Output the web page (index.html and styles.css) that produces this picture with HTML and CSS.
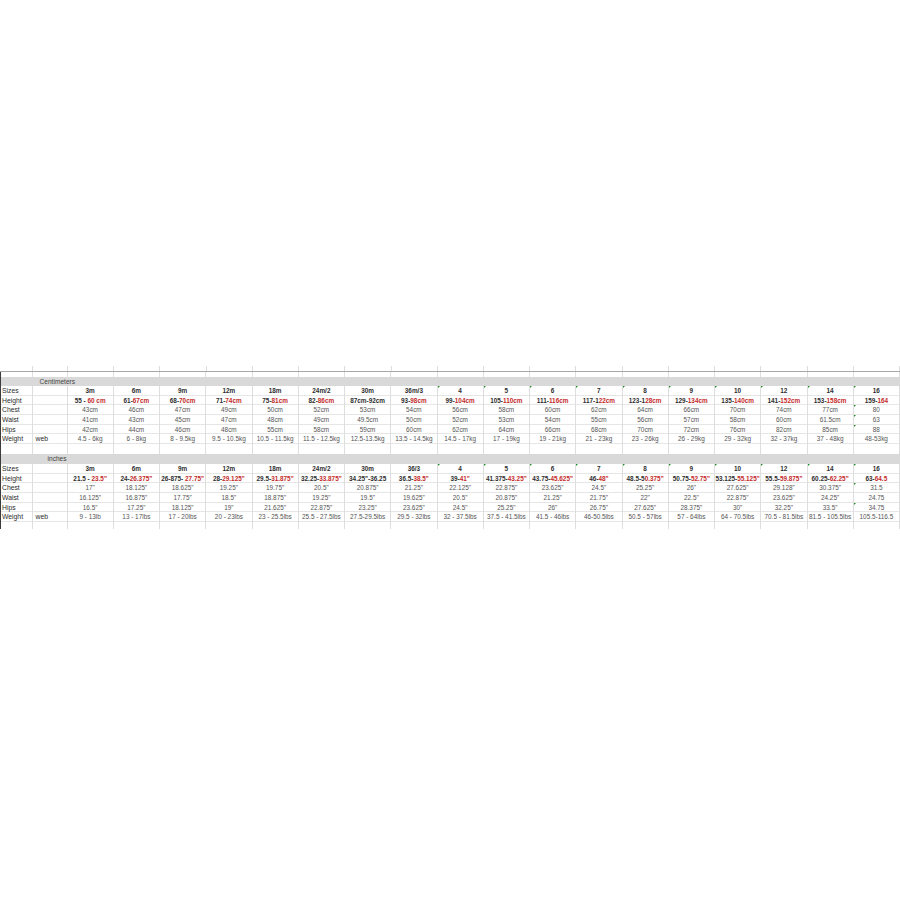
FILE: index.html
```html
<!DOCTYPE html>
<html>
<head>
<meta charset="utf-8">
<link rel="stylesheet" href="styles.css">
</head>
<body>
<div class="sheet">
  <div class="row top"><div class="c"></div><div class="c"></div><div class="c"></div><div class="c"></div><div class="c"></div><div class="c"></div><div class="c"></div><div class="c"></div><div class="c"></div><div class="c"></div><div class="c"></div><div class="c"></div><div class="c"></div><div class="c"></div><div class="c"></div><div class="c"></div><div class="c"></div><div class="c"></div><div class="c"></div><div class="c"></div></div>
  <div class="framed">
    <div class="row thin"><div class="c"></div><div class="c"></div><div class="c"></div><div class="c"></div><div class="c"></div><div class="c"></div><div class="c"></div><div class="c"></div><div class="c"></div><div class="c"></div><div class="c"></div><div class="c"></div><div class="c"></div><div class="c"></div><div class="c"></div><div class="c"></div><div class="c"></div><div class="c"></div><div class="c"></div><div class="c"></div></div>

    <div class="band"><span class="band-cm">Centimeters</span></div>
    <div class="row head"><div class="c lab">Sizes</div><div class="c"></div><div class="c">3m</div><div class="c">6m</div><div class="c">9m</div><div class="c">12m</div><div class="c">18m</div><div class="c">24m/2</div><div class="c">30m</div><div class="c">36m/3</div><div class="c f">4</div><div class="c f">5</div><div class="c f">6</div><div class="c f">7</div><div class="c f">8</div><div class="c f">9</div><div class="c f">10</div><div class="c f">12</div><div class="c f">14</div><div class="c f">16</div></div>
    <div class="row hgt"><div class="c lab">Height</div><div class="c"></div><div class="c">55 - <b>60 cm</b></div><div class="c">61-<b>67cm</b></div><div class="c">68-<b>70cm</b></div><div class="c">71-<b>74cm</b></div><div class="c">75-<b>81cm</b></div><div class="c">82-<b>86cm</b></div><div class="c">87cm-92cm</div><div class="c">93-<b>98cm</b></div><div class="c">99-<b>104cm</b></div><div class="c">105-<b>110cm</b></div><div class="c">111-<b>116cm</b></div><div class="c">117-1<b>22cm</b></div><div class="c">123-1<b>28cm</b></div><div class="c">129-<b>134cm</b></div><div class="c">135-<b>140cm</b></div><div class="c">141-<b>152cm</b></div><div class="c">153-<b>158cm</b></div><div class="c">159-<b>164</b></div></div>
    <div class="row"><div class="c lab">Chest</div><div class="c"></div><div class="c">43cm</div><div class="c">46cm</div><div class="c">47cm</div><div class="c">49cm</div><div class="c">50cm</div><div class="c">52cm</div><div class="c">53cm</div><div class="c">54cm</div><div class="c">56cm</div><div class="c">58cm</div><div class="c">60cm</div><div class="c">62cm</div><div class="c">64cm</div><div class="c">66cm</div><div class="c">70cm</div><div class="c">74cm</div><div class="c">77cm</div><div class="c f">80</div></div>
    <div class="row"><div class="c lab">Waist</div><div class="c"></div><div class="c">41cm</div><div class="c">43cm</div><div class="c">45cm</div><div class="c">47cm</div><div class="c">48cm</div><div class="c">49cm</div><div class="c">49.5cm</div><div class="c">50cm</div><div class="c">52cm</div><div class="c">53cm</div><div class="c">54cm</div><div class="c">55cm</div><div class="c">56cm</div><div class="c">57cm</div><div class="c">58cm</div><div class="c">60cm</div><div class="c">61.5cm</div><div class="c f">63</div></div>
    <div class="row"><div class="c lab">Hips</div><div class="c"></div><div class="c">42cm</div><div class="c">44cm</div><div class="c">46cm</div><div class="c">48cm</div><div class="c">55cm</div><div class="c">58cm</div><div class="c">59cm</div><div class="c">60cm</div><div class="c">62cm</div><div class="c">64cm</div><div class="c">66cm</div><div class="c">68cm</div><div class="c">70cm</div><div class="c">72cm</div><div class="c">76cm</div><div class="c">82cm</div><div class="c">85cm</div><div class="c f">88</div></div>
    <div class="row"><div class="c lab">Weight</div><div class="c sub">web</div><div class="c">4.5 - 6kg</div><div class="c">6 - 8kg</div><div class="c">8 - 9.5kg</div><div class="c">9.5 - 10.5kg</div><div class="c">10.5 - 11.5kg</div><div class="c">11.5 - 12.5kg</div><div class="c">12.5-13.5kg</div><div class="c">13.5 - 14.5kg</div><div class="c">14.5 - 17kg</div><div class="c">17 - 19kg</div><div class="c">19 - 21kg</div><div class="c">21 - 23kg</div><div class="c">23 - 26kg</div><div class="c">26 - 29kg</div><div class="c">29 - 32kg</div><div class="c">32 - 37kg</div><div class="c">37 - 48kg</div><div class="c">48-53kg</div></div>
    <div class="row gap"><div class="c"></div><div class="c"></div><div class="c"></div><div class="c"></div><div class="c"></div><div class="c"></div><div class="c"></div><div class="c"></div><div class="c"></div><div class="c"></div><div class="c"></div><div class="c"></div><div class="c"></div><div class="c"></div><div class="c"></div><div class="c"></div><div class="c"></div><div class="c"></div><div class="c"></div><div class="c"></div></div>

    <div class="band"><span class="band-in">inches</span></div>
    <div class="row head"><div class="c lab">Sizes</div><div class="c"></div><div class="c">3m</div><div class="c">6m</div><div class="c">9m</div><div class="c">12m</div><div class="c">18m</div><div class="c">24m/2</div><div class="c">30m</div><div class="c">36/3</div><div class="c f">4</div><div class="c f">5</div><div class="c f">6</div><div class="c f">7</div><div class="c f">8</div><div class="c f">9</div><div class="c f">10</div><div class="c f">12</div><div class="c f">14</div><div class="c f">16</div></div>
    <div class="row hgt"><div class="c lab">Height</div><div class="c"></div><div class="c">21.5 - <b>23.5"</b></div><div class="c">24-<b>26.375"</b></div><div class="c">26-875- <b>27.75"</b></div><div class="c">28-<b>29.125"</b></div><div class="c">29.5-<b>31.875"</b></div><div class="c">32.25-<b>33.875"</b></div><div class="c">34.25"-36.25</div><div class="c">36.5-<b>38.5"</b></div><div class="c">39-<b>41"</b></div><div class="c">41.375-<b>43.25"</b></div><div class="c">43.75-<b>45.625"</b></div><div class="c">46-<b>48"</b></div><div class="c">48.5-5<b>0.375"</b></div><div class="c">50.75-<b>52.75"</b></div><div class="c">53.125-<b>55.125"</b></div><div class="c">55.5-<b>59.875"</b></div><div class="c">60.25-<b>62.25"</b></div><div class="c">63-<b>64.5</b></div></div>
    <div class="row"><div class="c lab">Chest</div><div class="c"></div><div class="c">17"</div><div class="c">18.125"</div><div class="c">18.625"</div><div class="c">19.25"</div><div class="c">19.75"</div><div class="c">20.5"</div><div class="c">20.875"</div><div class="c">21.25"</div><div class="c">22.125"</div><div class="c">22.875"</div><div class="c">23.625"</div><div class="c">24.5"</div><div class="c">25.25"</div><div class="c">26"</div><div class="c">27.625"</div><div class="c">29.128"</div><div class="c">30.375"</div><div class="c f">31.5</div></div>
    <div class="row"><div class="c lab">Waist</div><div class="c"></div><div class="c">16.125"</div><div class="c">16.875"</div><div class="c">17.75"</div><div class="c">18.5"</div><div class="c">18.875"</div><div class="c">19.25"</div><div class="c">19.5"</div><div class="c">19.625"</div><div class="c">20.5"</div><div class="c">20.875"</div><div class="c">21.25"</div><div class="c">21.75"</div><div class="c">22"</div><div class="c">22.5"</div><div class="c">22.875"</div><div class="c">23.625"</div><div class="c">24.25"</div><div class="c">24.75</div></div>
    <div class="row"><div class="c lab">Hips</div><div class="c"></div><div class="c">16.5"</div><div class="c">17.25"</div><div class="c">18.125"</div><div class="c">19"</div><div class="c">21.625"</div><div class="c">22.875"</div><div class="c">23.25"</div><div class="c">23.625"</div><div class="c">24.5"</div><div class="c">25.25"</div><div class="c">26"</div><div class="c">26.75"</div><div class="c">27.625"</div><div class="c">28.375"</div><div class="c">30"</div><div class="c">32.25"</div><div class="c">33.5"</div><div class="c f">34.75</div></div>
    <div class="row"><div class="c lab">Weight</div><div class="c sub">web</div><div class="c">9 - 13lb</div><div class="c">13 - 17lbs</div><div class="c">17 - 20lbs</div><div class="c">20 - 23lbs</div><div class="c">23 - 25.5lbs</div><div class="c">25.5 - 27.5lbs</div><div class="c">27.5-29.5lbs</div><div class="c">29.5 - 32lbs</div><div class="c">32 - 37.5lbs</div><div class="c">37.5 - 41.5lbs</div><div class="c">41.5 - 46lbs</div><div class="c">46-50.5lbs</div><div class="c">50.5 - 57lbs</div><div class="c">57 - 64lbs</div><div class="c">64 - 70.5lbs</div><div class="c">70.5 - 81.5lbs</div><div class="c">81.5 - 105.5lbs</div><div class="c">105.5-116.5</div></div>
    <div class="row end"><div class="c"></div><div class="c"></div><div class="c"></div><div class="c"></div><div class="c"></div><div class="c"></div><div class="c"></div><div class="c"></div><div class="c"></div><div class="c"></div><div class="c"></div><div class="c"></div><div class="c"></div><div class="c"></div><div class="c"></div><div class="c"></div><div class="c"></div><div class="c"></div><div class="c"></div><div class="c"></div></div>
  </div>
</div>
</body>
</html>
```

FILE: styles.css
```css
html, body {
  margin: 0;
  padding: 0;
  background: #ffffff;
}

.sheet {
  padding-top: 366px;
  width: 900px;
  font-family: "Liberation Sans", Arial, sans-serif;
  font-size: 6.4px;
  color: #555555;
}

.framed {
  border-left: 1.5px solid #3c3c3c;
}

.row {
  display: grid;
  grid-template-columns: 33px 35px repeat(18, 1fr);
  height: 9.67px;
  line-height: 9.67px;
  border-bottom: 1px solid #e6e6e6;
  box-sizing: border-box;
}

.framed .row {
  grid-template-columns: 31.5px 35px repeat(18, 1fr);
}

.row.top {
  height: 6px;
  border-bottom: 1px solid #a8a8a8;
}

.row.thin {
  height: 4.5px;
  border-bottom: none;
}

.row.gap {
  height: 10.3px;
  border-bottom: none;
}

.row.end {
  height: 7px;
  border-bottom: none;
}

.c {
  position: relative;
  border-right: 1px solid #dedede;
  text-align: center;
  white-space: nowrap;
  overflow: visible;
}

.c.lab {
  text-align: left;
  padding-left: 1px;
  color: #2c2c2c;
  font-size: 6.8px;
}

.c.sub {
  text-align: left;
  padding-left: 3px;
  color: #2c2c2c;
  font-size: 6.8px;
}

.head .c,
.hgt .c {
  color: #2e2e2e;
  font-weight: bold;
}

.head .c.lab,
.hgt .c.lab {
  font-weight: normal;
}

.hgt b {
  color: #c42a2a;
}

.c.f::before {
  content: "";
  position: absolute;
  left: 0;
  top: 0;
  border-top: 2.5px solid #1f8a1f;
  border-right: 2.5px solid transparent;
}

.band {
  height: 9.6px;
  line-height: 9.6px;
  background: #d9d9d9;
  color: #444444;
  font-size: 6.6px;
}

.band-cm {
  padding-left: 38.5px;
}

.band-in {
  padding-left: 46.5px;
}
```
